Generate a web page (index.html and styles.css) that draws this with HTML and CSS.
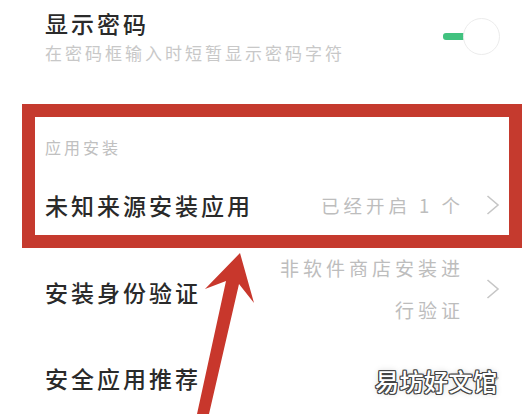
FILE: index.html
```html
<!DOCTYPE html>
<html lang="zh-CN">
<head>
<meta charset="utf-8">
<title>设置</title>
<link rel="stylesheet" href="styles.css">
</head>
<body>
<div class="page">
  <div class="row-pwd">
    <div class="pwd-text">
      <div class="title">显示密码</div>
      <div class="sub">在密码框输入时短暂显示密码字符</div>
    </div>
    <div class="toggle"><span class="track"></span><span class="thumb"></span></div>
  </div>

  <div class="box">
    <div class="group-head">应用安装</div>
    <div class="row row-in">
      <div class="title">未知来源安装应用</div>
      <div class="right">
        <span class="value">已经开启 1 个</span>
        <svg class="chev" viewBox="0 0 14 20" width="14" height="20"><polyline points="1.5,1 12,10 1.5,19" fill="none" stroke="#c6c6c6" stroke-width="1.6"/></svg>
      </div>
    </div>
  </div>

  <div class="row row-verify">
    <div class="title">安装身份验证</div>
    <div class="right">
      <span class="value value2">非软件商店安装进<br>行验证</span>
      <svg class="chev" viewBox="0 0 14 20" width="14" height="20"><polyline points="1.5,1 12,10 1.5,19" fill="none" stroke="#c6c6c6" stroke-width="1.6"/></svg>
    </div>
  </div>

  <div class="row row-rec">
    <div class="title">安全应用推荐</div>
    <div class="right">
      <svg class="chev" viewBox="0 0 14 20" width="14" height="20"><polyline points="1.5,1 12,10 1.5,19" fill="none" stroke="#c6c6c6" stroke-width="1.6"/></svg>
    </div>
  </div>

  <svg class="arrow" viewBox="0 0 522 414" width="522" height="414">
    <polygon points="240,253 254,303 239,284 209,414 197,414 226,281 205,289" fill="#c8372c"/>
  </svg>
  <div class="watermark">易坊好文馆</div>
</div>
</body>
</html>
```

FILE: styles.css
```css
* { box-sizing: border-box; }
html, body { margin: 0; padding: 0; background: #fff; }
body {
  font-family: "Noto Sans CJK SC", "Noto Sans", sans-serif;
  color: #2a2a2a;
}
.page {
  position: relative;
  width: 522px;
  height: 414px;
  overflow: hidden;
}
.title {
  font-size: 23px;
  line-height: 30px;
  font-weight: 500;
  letter-spacing: 3px;
  color: #2a2a2a;
  white-space: nowrap;
}
.row-pwd {
  display: flex;
  align-items: center;
  justify-content: space-between;
  padding: 8px 22px 0 45px;
}
.sub {
  margin-top: 3px;
  font-size: 17px;
  line-height: 24px;
  letter-spacing: 3px;
  color: #c8c8c8;
  white-space: nowrap;
}
.toggle {
  position: relative;
  width: 57px;
  height: 37px;
}
.track {
  position: absolute;
  left: 0;
  top: 15px;
  width: 26px;
  height: 7px;
  border-radius: 3px;
  background: #41c27f;
}
.thumb {
  position: absolute;
  right: 0;
  top: 0;
  width: 37px;
  height: 37px;
  border-radius: 50%;
  background: #fff;
  border: 1.5px solid #ececec;
}
.box {
  margin: 39px 0 0 22px;
  width: 500px;
  border: 13px solid #c53a2e;
  padding: 19px 9px 6px 10px;
}
.group-head {
  font-size: 16px;
  line-height: 22px;
  letter-spacing: 3px;
  color: #c0c0c0;
  margin-bottom: 23px;
}
.row {
  display: flex;
  align-items: center;
  justify-content: space-between;
}
.row-in { height: 48px; }
.right {
  display: flex;
  align-items: center;
  gap: 22px;
}
.value {
  font-size: 18.5px;
  line-height: 24px;
  letter-spacing: 4px;
  color: #bdbdbd;
  text-align: right;
  white-space: nowrap;
}
.value2 {
  font-size: 19px;
  line-height: 42px;
  letter-spacing: 4px;
}
.chev { display: block; }
.row-verify {
  height: 82px;
  padding: 0 22px 0 45px;
}
.row-verify .title { padding-top: 6px; }
.row-rec {
  height: 96px;
  padding: 0 22px 0 45px;
}
.arrow {
  position: absolute;
  left: 0;
  top: 0;
  pointer-events: none;
}
.watermark {
  position: absolute;
  left: 375px;
  top: 368px;
  font-size: 24px;
  line-height: 26px;
  font-weight: 500;
  letter-spacing: 0.5px;
  color: #fff;
  white-space: nowrap;
  text-shadow:
    1px 0 0 #444, -1px 0 0 #444, 0 1px 0 #444, 0 -1px 0 #444,
    1px 1px 0 #444, -1px -1px 0 #444, 1px -1px 0 #444, -1px 1px 0 #444,
    0 0 6px rgba(0,0,0,0.25);
}
```
